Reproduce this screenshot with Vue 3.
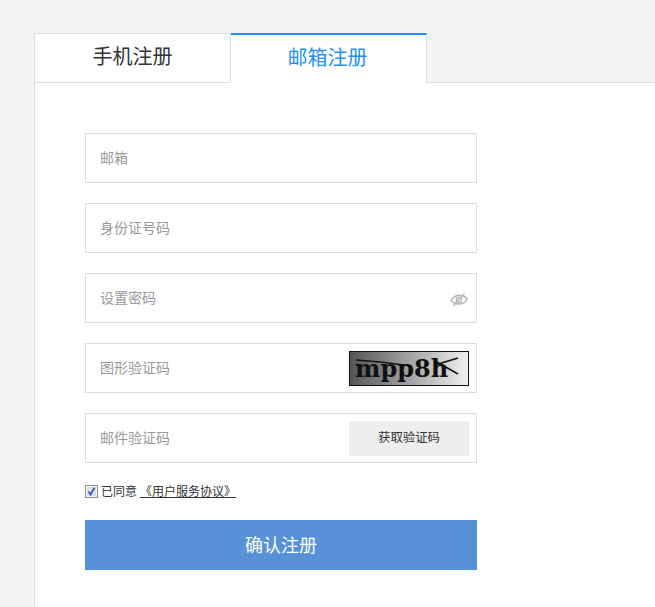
<template>
  <div class="page">
    <div class="tabs">
      <div class="tab">手机注册</div>
      <div class="tab active">邮箱注册</div>
    </div>
    <div class="panel">
      <form class="form" @submit.prevent>
        <div v-for="f in fields" :key="f.label" class="field">
          <span class="label">{{ f.label }}</span>
          <svg v-if="f.type === 'eye'" class="eye" width="18" height="13" viewBox="0 0 18 13" fill="none" stroke="#b5b5b5" stroke-width="1.400">
            <path d="M.7 7.500C3.500 4 6 2.300 9.500 2.300C12.500 2.300 15 3.500 17.300 5.800C15 9.500 12 11 8.500 11C5.500 11 3 9.800 .7 7.500z" />
            <circle cx="9" cy="6.700" r="2.600" />
            <path d="M3.500 12.500L14.500 .5" />
          </svg>
          <div v-if="f.type === 'captcha'" class="captcha">
            <span class="captcha-text">mpp8h</span>
            <svg class="captcha-lines" width="118" height="33" viewBox="0 0 118 33" fill="none" stroke="#111" stroke-width="1.500">
              <path d="M6 8L30 10L62 14" />
              <path d="M85 13L108 6" />
              <path d="M85 9L108 22" />
            </svg>
          </div>
          <button v-if="f.type === 'code'" type="button" class="code-btn">获取验证码</button>
        </div>
        <div class="agree">
          <span class="check">
            <svg width="9" height="9" viewBox="0 0 9 9" fill="none" stroke="#4257b0" stroke-width="1.800">
              <path d="M1.500 4.500L3.500 7.500L7.500 .8" />
            </svg>
          </span>
          <span class="agree-text">已同意</span>
          <a class="terms">《用户服务协议》</a>
        </div>
        <button type="button" class="submit">确认注册</button>
      </form>
    </div>
  </div>
</template>

<script setup>
const fields = [
  { label: '邮箱' },
  { label: '身份证号码' },
  { label: '设置密码', type: 'eye' },
  { label: '图形验证码', type: 'captcha' },
  { label: '邮件验证码', type: 'code' }
];
</script>

<style>
html, body {
  background: #f3f3f3;
}
</style>

<style scoped>
.page {
  height: 607px;
  overflow: hidden;
  padding: 33px 0 0 34px;
  box-sizing: border-box;
  background: #f3f3f3;
  font-family: "Noto Sans CJK SC", "Liberation Sans", sans-serif;
}

.tabs {
  display: flex;
  height: 50px;
  position: relative;
  z-index: 1;
  margin-bottom: -1px;
}

.tab {
  width: 197px;
  height: 50px;
  box-sizing: border-box;
  background: #fff;
  border: 1px solid #ddd;
  text-align: center;
  line-height: 44px;
  font-size: 20px;
  color: #333;
}

.tab.active {
  width: 196px;
  border-top: 2px solid #1e90ff;
  border-left: 0;
  border-bottom: 0;
  padding-right: 2px;
  color: #1e90ff;
}

.panel {
  height: 600px;
  box-sizing: border-box;
  background: #fff;
  border-top: 1px solid #ddd;
  border-left: 1px solid #ddd;
  padding: 50px 0 0 50px;
}

.form {
  width: 392px;
  display: flex;
  flex-direction: column;
  gap: 20px;
}

.field {
  height: 50px;
  box-sizing: border-box;
  border: 1px solid #ddd;
  background: #fff;
  padding: 0 7px 0 14px;
  display: flex;
  align-items: center;
  justify-content: space-between;
  position: relative;
}

.label {
  font-size: 14px;
  line-height: 20px;
  margin-top: -3px;
  color: #999;
}

.eye {
  position: absolute;
  right: 8px;
  top: 19px;
}

.captcha {
  width: 120px;
  height: 35px;
  box-sizing: border-box;
  border: 1px solid #111;
  background: linear-gradient(90deg, #555, #f0f0f0);
  position: relative;
  padding-left: 5px;
  overflow: hidden;
}

.captcha-text {
  font-family: "DejaVu Serif", serif;
  font-weight: bold;
  font-size: 24px;
  line-height: 33px;
  color: #111;
}

.captcha-lines {
  position: absolute;
  left: 0;
  top: 0;
}

.code-btn {
  width: 120px;
  height: 35px;
  border: 0;
  padding: 0 0 2px;
  background: #eee;
  font: inherit;
  font-size: 12.400px;
  color: #333;
}

.agree {
  display: flex;
  align-items: center;
  height: 16px;
  margin: 0 0 1px;
  font-size: 12px;
  color: #333;
}

.agree-text,
.terms {
  margin-top: -2px;
}

.check {
  width: 13px;
  height: 13px;
  box-sizing: border-box;
  border: 1px solid #8e8f8f;
  box-shadow: inset 0 0 0 1px #f4f4f8;
  background: #dcdfee;
  margin-right: 3px;
  display: flex;
  align-items: center;
  justify-content: center;
}

.terms {
  margin-left: 3px;
  color: #333;
  text-decoration: underline;
}

.submit {
  height: 50px;
  border: 0;
  padding: 0 0 2px;
  background: #5792d9;
  color: #fff;
  font: inherit;
  font-size: 18px;
}
</style>
